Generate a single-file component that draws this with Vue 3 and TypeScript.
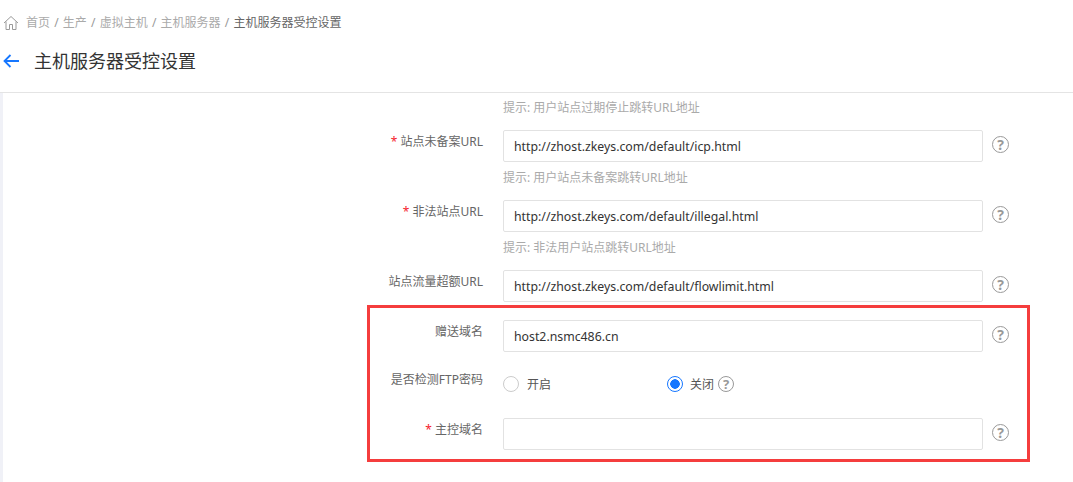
<script setup lang="ts">
interface Row { label: string; required?: boolean; value: string; hint?: string }
const crumbs = ['首页', '生产', '虚拟主机', '主机服务器']
const upper: Row[] = [
  { label: '站点未备案URL', required: true, value: 'http://zhost.zkeys.com/default/icp.html', hint: '提示: 用户站点未备案跳转URL地址' },
  { label: '非法站点URL', required: true, value: 'http://zhost.zkeys.com/default/illegal.html', hint: '提示: 非法用户站点跳转URL地址' },
  { label: '站点流量超额URL', value: 'http://zhost.zkeys.com/default/flowlimit.html' },
  { label: '赠送域名', value: 'host2.nsmc486.cn' },
]
</script>

<template>
  <div class="page">
    <nav class="crumbs">
      <svg class="home" width="16" height="16" viewBox="0 0 16 16" fill="none" stroke="#9a9a9a" stroke-width="1">
        <path d="M1 8 8 1.5 15 8M3 6.5V14.5H6.5V9.5H9.5V14.5H13V6.5" />
      </svg>
      <template v-for="c in crumbs" :key="c">
        <span class="crumb">{{ c }}</span><span class="sep">/</span>
      </template>
      <span class="current">主机服务器受控设置</span>
    </nav>
    <header class="title-bar">
      <svg width="16" height="14" viewBox="0 0 16 14" fill="none" stroke="#1677ff" stroke-width="1.8">
        <path d="M16 7H1.5M7.5 1 1.5 7l6 6" />
      </svg>
      <h1>主机服务器受控设置</h1>
    </header>
    <main class="content">
      <div class="form">
        <div class="item has-hint top-hint">
          <p class="hint">提示: 用户站点过期停止跳转URL地址</p>
        </div>
        <div v-for="r in upper" :key="r.label" class="item" :class="{ 'has-hint': r.hint }">
          <div class="line">
            <label class="label"><i v-if="r.required">*</i>{{ r.label }}</label>
            <div class="input">{{ r.value }}</div>
            <span class="q big">?</span>
          </div>
          <p v-if="r.hint" class="hint">{{ r.hint }}</p>
        </div>
        <div class="item radio-item">
          <div class="line">
            <label class="label radio-label">是否检测FTP密码</label>
            <div class="radios">
              <span class="radio"><b class="dot"></b>开启</span>
              <span class="radio"><b class="dot on"></b>关闭<span class="q small">?</span></span>
            </div>
          </div>
        </div>
        <div class="item">
          <div class="line">
            <label class="label"><i>*</i>主控域名</label>
            <div class="input"></div>
            <span class="q big">?</span>
          </div>
        </div>
      </div>
      <div class="marker"></div>
    </main>
  </div>
</template>

<style>
html, body { margin: 0; background: #fff; overflow: hidden; }
</style>

<style scoped>
.page {
  width: 1073px;
  height: 482px;
  overflow: hidden;
  display: flex;
  flex-direction: column;
  font-family: "Noto Sans", "Noto Sans CJK SC", sans-serif;
  font-size: 12px;
  color: #666;
}
.crumbs {
  height: 16px;
  margin-top: 15px;
  padding-left: 3px;
  display: flex;
  align-items: center;
  line-height: 16px;
  color: #aaa;
}
.home { margin-right: 7px; }
.sep { margin: 0 4.2px; color: #999; }
.current { color: #666; }
.title-bar {
  height: 62px;
  box-sizing: border-box;
  padding-left: 3px;
  border-bottom: 1px solid #e4e4e4;
  display: flex;
  align-items: center;
  padding-bottom: 2px;
}
.title-bar h1 {
  margin: 0 0 0 15px;
  font-size: 18px;
  line-height: 24px;
  font-weight: 400;
  color: #333;
}
.content {
  position: relative;
  flex: 1;
  border-left: 3px solid #f0f1f7;
  padding-top: 4px;
}
.form { margin-left: 362px; width: 660px; }
.item { margin-bottom: 18px; }
.item.has-hint { margin-bottom: 13px; }
.item.radio-item { margin-bottom: 20px; }
.top-hint .hint { margin-top: 0; }
.line { display: flex; align-items: flex-start; }
.label {
  width: 118px;
  flex: none;
  text-align: right;
  line-height: 16px;
  padding-top: 4px;
  color: #666;
}
.radio-label { padding-top: 2px; }
.label i {
  font-style: normal;
  color: #f5222d;
  margin-right: 3px;
}
.input {
  width: 480px;
  height: 32px;
  flex: none;
  box-sizing: border-box;
  margin-left: 20px;
  padding-left: 10px;
  border: 1px solid #e2e2e2;
  border-radius: 2px;
  font-size: 12.3px;
  line-height: 31px;
  color: #333;
}
.hint {
  margin: 5px 0 0 138px;
  height: 20px;
  line-height: 21px;
  color: #aaa;
}
.q {
  flex: none;
  box-sizing: border-box;
  border: 1px solid #999;
  border-radius: 50%;
  color: #999;
  text-align: center;
  font-weight: 700;
}
.big {
  width: 17px;
  height: 17px;
  margin: 6px 0 0 9px;
  line-height: 15px;
  font-size: 14px;
}
.small {
  display: inline-block;
  width: 16px;
  height: 16px;
  margin-left: 4px;
  line-height: 14px;
  font-size: 13px;
}
.radios {
  margin-left: 20px;
  display: flex;
  height: 28px;
  align-items: center;
}
.radio {
  width: 164px;
  display: flex;
  align-items: center;
  color: #555;
}
.dot {
  width: 16px;
  height: 16px;
  box-sizing: border-box;
  margin-right: 8px;
  border: 1px solid #ccc;
  border-radius: 50%;
  background: #fff;
}
.dot.on {
  margin-right: 7px;
  border-color: #1677ff;
  background: radial-gradient(circle, #1677ff 0 4.5px, #fff 5px);
}
.marker {
  position: absolute;
  left: 364px;
  top: 212px;
  width: 663px;
  height: 157px;
  box-sizing: border-box;
  border: 3px solid #f53d3d;
  pointer-events: none;
}
</style>
